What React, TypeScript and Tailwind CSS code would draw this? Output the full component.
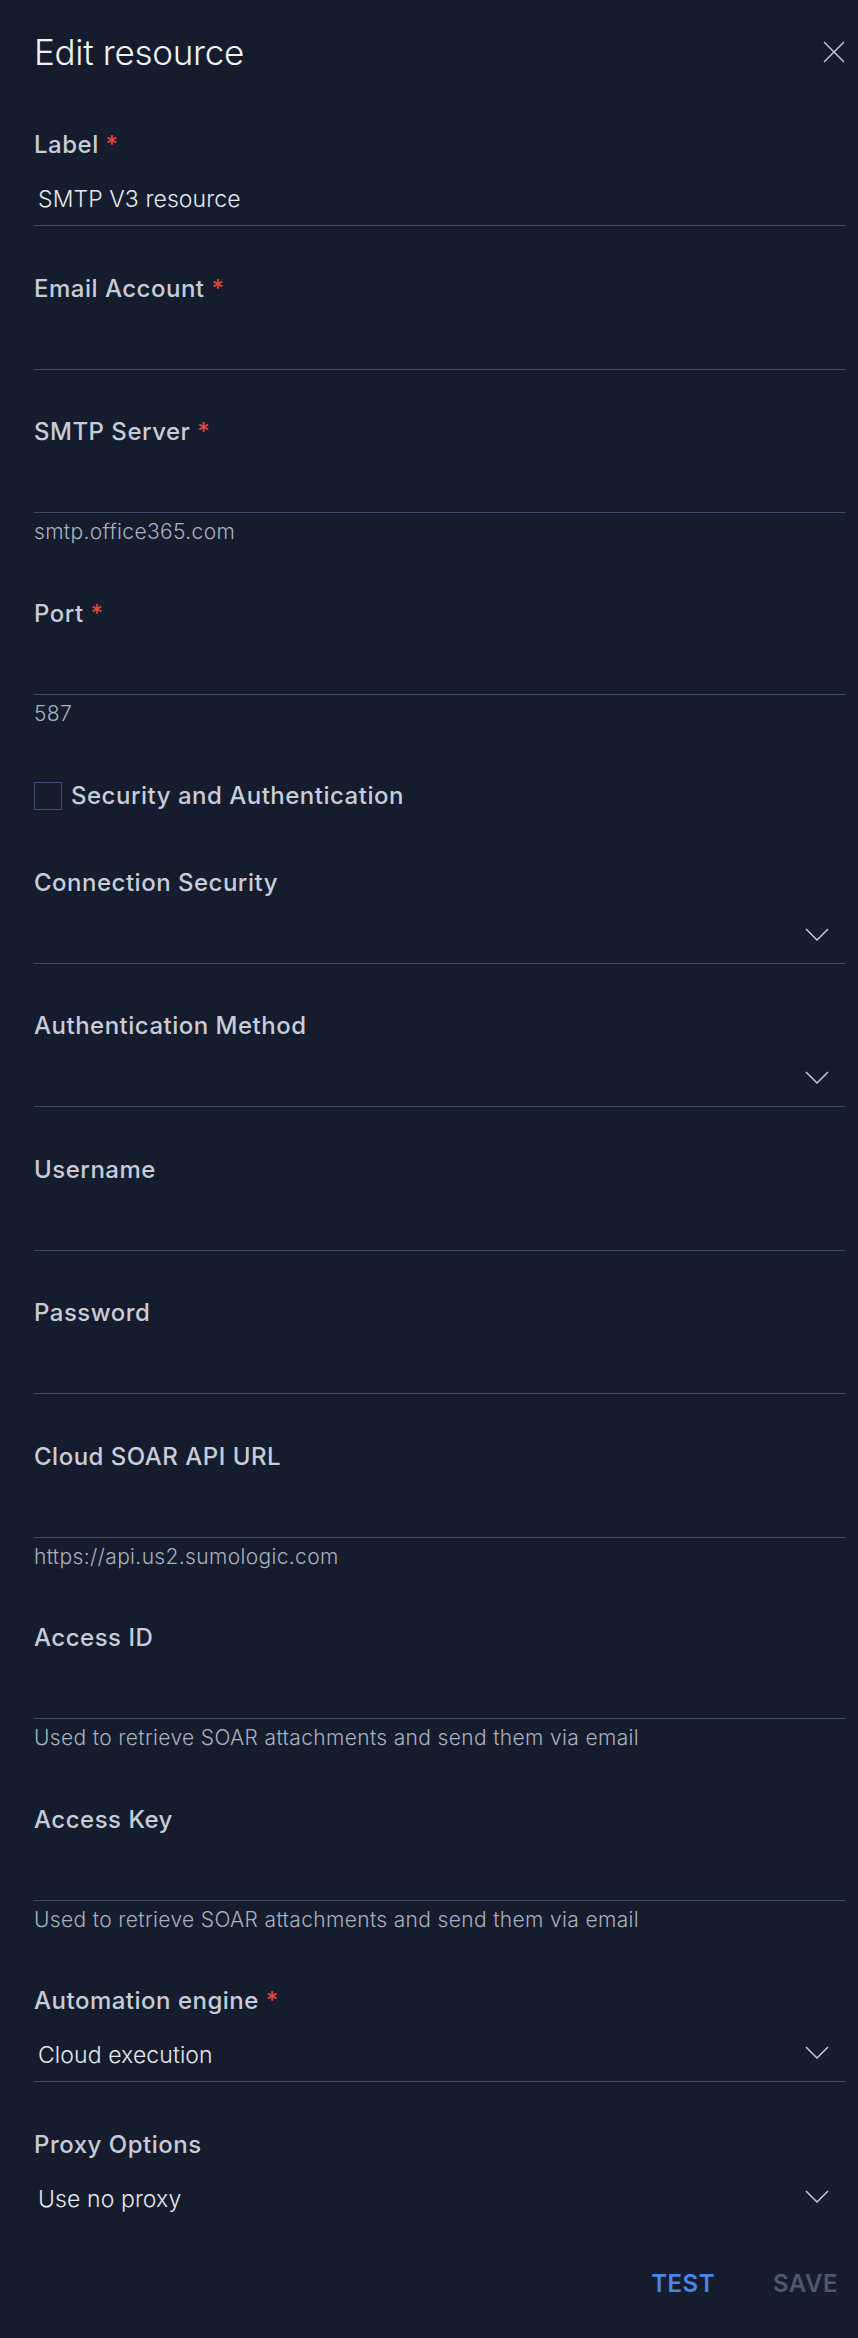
import React from "react";

type FieldProps = {
  label: string;
  required?: boolean;
  value?: string;
  helper?: string;
  select?: boolean;
  noBorder?: boolean;
  mt?: string;
};

function Chevron() {
  return (
    <svg width="24" height="13" viewBox="0 0 24 13" fill="none" className="shrink-0">
      <polyline points="1,1 12,12 23,1" stroke="#c3cad5" strokeWidth="1.5" fill="none" />
    </svg>
  );
}

function Field({ label, required, value, helper, select, noBorder, mt = "mt-[44.5px]" }: FieldProps) {
  return (
    <div className={mt}>
      <div className="h-[36px] text-[24px] leading-[36px] font-medium tracking-[0.5px] text-[#c6cdd8]">
        {label}
        {required && <span className="text-[#e0463c]"> *</span>}
      </div>
      <div
        className={
          "h-[63px] pt-[18px] flex items-start justify-between " +
          (noBorder ? "" : "border-b border-[#3d4b69]")
        }
      >
        <span className="pl-[4px] text-[23px] leading-[36px] font-light tracking-[0.1px] text-[#e6e9ee]">
          {value ?? ""}
        </span>
        {select && (
          <span className="h-[31px] flex items-center pr-[16px]">
            <Chevron />
          </span>
        )}
      </div>
      {helper && (
        <div className="pt-[4px] pb-[4px] text-[21px] leading-[30px] font-light tracking-[0.35px] text-[#a9b1bf]">
          {helper}
        </div>
      )}
    </div>
  );
}

export default function App() {
  return (
    <div className="min-h-[2338px] w-[858px] bg-[#151c2e] font-['Inter',sans-serif]">
      <div className="pl-[34px] pr-[13px] pt-[30px] pb-[37px]">
        <div className="flex items-center justify-between">
          <h1 className="text-[35px] leading-[44px] font-light tracking-[-0.3px] text-[#f1f3f6]">Edit resource</h1>
          <svg width="22" height="22" viewBox="0 0 22 22" fill="none">
            <line x1="1" y1="1" x2="21" y2="21" stroke="#c3cad5" strokeWidth="1.4" />
            <line x1="21" y1="1" x2="1" y2="21" stroke="#c3cad5" strokeWidth="1.4" />
          </svg>
        </div>

        <Field label="Label" required value="SMTP V3 resource" mt="mt-[53px]" />
        <Field label="Email Account" required />
        <Field label="SMTP Server" required helper="smtp.office365.com" />
        <Field label="Port" required helper="587" />

        <div className="mt-[45px] h-[36px] flex items-center">
          <span className="w-[28px] h-[28px] border-[1.5px] border-[#3a4c73] shrink-0" />
          <span className="ml-[9px] text-[24px] leading-[36px] font-medium tracking-[0.5px] text-[#c6cdd8]">
            Security and Authentication
          </span>
        </div>

        <Field label="Connection Security" select mt="mt-[51px]" />
        <Field label="Authentication Method" select />
        <Field label="Username" />
        <Field label="Password" />
        <Field label="Cloud SOAR API URL" helper="https://api.us2.sumologic.com" />
        <Field label="Access ID" helper="Used to retrieve SOAR attachments and send them via email" />
        <Field label="Access Key" helper="Used to retrieve SOAR attachments and send them via email" />
        <Field label="Automation engine" required value="Cloud execution" select />
        <Field label="Proxy Options" value="Use no proxy" select noBorder />

        <div className="mt-[40px] flex justify-end items-center gap-[58px] pr-[7px]">
          <button className="text-[24px] leading-[36px] font-semibold tracking-[0.5px] text-[#4a86e8]">TEST</button>
          <button className="text-[24px] leading-[36px] font-semibold tracking-[0.5px] text-[#4b5870]">SAVE</button>
        </div>
      </div>
    </div>
  );
}
